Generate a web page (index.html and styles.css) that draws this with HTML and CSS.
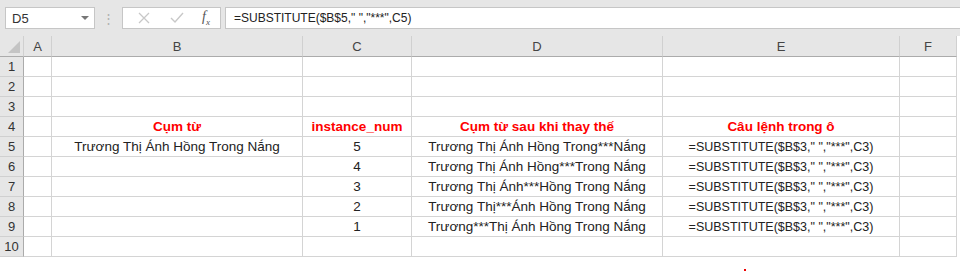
FILE: index.html
```html
<!DOCTYPE html>
<html lang="vi">
<head>
    <meta charset="UTF-8">
    <title>SUBSTITUTE</title>
    <link rel="stylesheet" href="styles.css">
</head>
<body>
    <div class="toolbar">
        <div class="name-box">
            <span>D5</span>
            <span class="caret"></span>
        </div>
        <div class="grip">⋮</div>
        <div class="fx-buttons">
            <svg width="14" height="14" viewBox="0 0 14 14"><path d="M2 2 L12 12 M12 2 L2 12" stroke="#c8c8c8" stroke-width="1.3" fill="none"/></svg>
            <svg width="16" height="14" viewBox="0 0 16 14"><path d="M2 7 L6 11 L14 2" stroke="#c8c8c8" stroke-width="1.4" fill="none"/></svg>
            <span class="fx"><i>f</i><sub>x</sub></span>
        </div>
        <div class="formula">=SUBSTITUTE($B$5," ","***",C5)</div>
    </div>

    <div class="sheet">
        <div class="corner"><span class="tri"></span></div>
        <div class="col-head">A</div>
        <div class="col-head">B</div>
        <div class="col-head">C</div>
        <div class="col-head">D</div>
        <div class="col-head">E</div>
        <div class="col-head">F</div>

        <div class="row-head">1</div><div class="cell"></div><div class="cell"></div><div class="cell"></div><div class="cell"></div><div class="cell"></div><div class="cell"></div>
        <div class="row-head">2</div><div class="cell"></div><div class="cell"></div><div class="cell"></div><div class="cell"></div><div class="cell"></div><div class="cell"></div>
        <div class="row-head">3</div><div class="cell"></div><div class="cell"></div><div class="cell"></div><div class="cell"></div><div class="cell"></div><div class="cell"></div>

        <div class="row-head">4</div><div class="cell"></div>
        <div class="cell title">Cụm từ</div>
        <div class="cell title">instance_num</div>
        <div class="cell title">Cụm từ sau khi thay thế</div>
        <div class="cell title">Câu lệnh trong ô</div>
        <div class="cell"></div>

        <div class="row-head">5</div><div class="cell"></div>
        <div class="cell">Trương Thị Ánh Hồng Trong Nắng</div>
        <div class="cell">5</div>
        <div class="cell">Trương Thị Ánh Hồng Trong***Nắng</div>
        <div class="cell code">=SUBSTITUTE($B$3," ","***",C3)</div>
        <div class="cell"></div>

        <div class="row-head">6</div><div class="cell"></div><div class="cell"></div>
        <div class="cell">4</div>
        <div class="cell">Trương Thị Ánh Hồng***Trong Nắng</div>
        <div class="cell code">=SUBSTITUTE($B$3," ","***",C3)</div>
        <div class="cell"></div>

        <div class="row-head">7</div><div class="cell"></div><div class="cell"></div>
        <div class="cell">3</div>
        <div class="cell">Trương Thị Ánh***Hồng Trong Nắng</div>
        <div class="cell code">=SUBSTITUTE($B$3," ","***",C3)</div>
        <div class="cell"></div>

        <div class="row-head">8</div><div class="cell"></div><div class="cell"></div>
        <div class="cell">2</div>
        <div class="cell">Trương Thị***Ánh Hồng Trong Nắng</div>
        <div class="cell code">=SUBSTITUTE($B$3," ","***",C3)</div>
        <div class="cell"></div>

        <div class="row-head">9</div><div class="cell"></div><div class="cell"></div>
        <div class="cell">1</div>
        <div class="cell">Trương***Thị Ánh Hồng Trong Nắng</div>
        <div class="cell code">=SUBSTITUTE($B$3," ","***",C3)</div>
        <div class="cell"></div>

        <div class="row-head">10</div><div class="cell"></div><div class="cell"></div><div class="cell"></div><div class="cell"></div><div class="cell"></div><div class="cell"></div>
    </div>
    <div class="footer"><span class="mark"></span></div>
</body>
</html>
```

FILE: styles.css
```css
body {
    margin: 0;
    width: 960px;
    height: 271px;
    overflow: hidden;
    background: #fff;
    font-family: "Liberation Sans", Arial, sans-serif;
}

/* Thanh công thức */
.toolbar {
    display: flex;
    align-items: center;
    height: 36px;
    padding: 0 0 0 5px;
    background: #e6e6e6;
}

.name-box {
    width: 90px;
    height: 22px;
    box-sizing: border-box;
    border: 1px solid #c6c6c6;
    background: #fff;
    display: flex;
    align-items: center;
    justify-content: space-between;
    padding: 0 5px 0 6px;
    font-size: 13px;
    color: #333;
}

.caret {
    width: 0;
    height: 0;
    border-left: 4px solid transparent;
    border-right: 4px solid transparent;
    border-top: 4px solid #777;
}

.grip {
    width: 27px;
    text-align: center;
    color: #b0b0b0;
    font-size: 13px;
}

.fx-buttons {
    width: 99px;
    height: 22px;
    box-sizing: border-box;
    border: 1px solid #c6c6c6;
    background: #fff;
    display: flex;
    align-items: center;
    justify-content: space-between;
    padding: 0 10px 0 14px;
}

.fx {
    font-family: "Liberation Serif", serif;
    font-size: 14px;
    color: #555;
}

.fx sub {
    font-size: 9px;
    font-style: italic;
}

.formula {
    flex: 1;
    margin-left: 4px;
    height: 22px;
    box-sizing: border-box;
    border: 1px solid #c6c6c6;
    border-right: none;
    background: #fff;
    padding: 3px 0 0 8px;
    font-size: 12px;
    color: #222;
}

/* Bảng tính */
.sheet {
    display: grid;
    grid-template-columns: 24px 28px 251px 109px 251px 237px 57px;
    grid-template-rows: 21px repeat(10, 20px);
    background: #e6e6e6;
    width: 957px;
}

.corner {
    position: relative;
    background: #e6e6e6;
    border-bottom: 1px solid #ababab;
    border-right: 1px solid #d0d0d0;
}

.tri {
    position: absolute;
    right: 3px;
    bottom: 3px;
    width: 0;
    height: 0;
    border-left: 12px solid transparent;
    border-bottom: 12px solid #c4c4c4;
}

.col-head {
    background: #e6e6e6;
    border-bottom: 1px solid #ababab;
    border-right: 1px solid #d0d0d0;
    display: flex;
    align-items: center;
    justify-content: center;
    font-size: 13px;
    color: #444;
}

.row-head {
    background: #e6e6e6;
    border-bottom: 1px solid #d0d0d0;
    border-right: 1px solid #ababab;
    display: flex;
    align-items: center;
    justify-content: center;
    font-size: 13px;
    color: #333;
}

.cell {
    background: #fff;
    border-bottom: 1px solid #d4d4d4;
    border-right: 1px solid #d4d4d4;
    display: flex;
    align-items: center;
    justify-content: center;
    font-size: 13.5px;
    color: #222;
    white-space: nowrap;
}

.code {
    font-size: 12.5px;
}

.title {
    color: #ff0000;
    font-weight: bold;
}

.footer {
    height: 14px;
    position: relative;
}

.mark {
    position: absolute;
    left: 744px;
    top: 12px;
    width: 2px;
    height: 2px;
    background: #e00;
}
```
